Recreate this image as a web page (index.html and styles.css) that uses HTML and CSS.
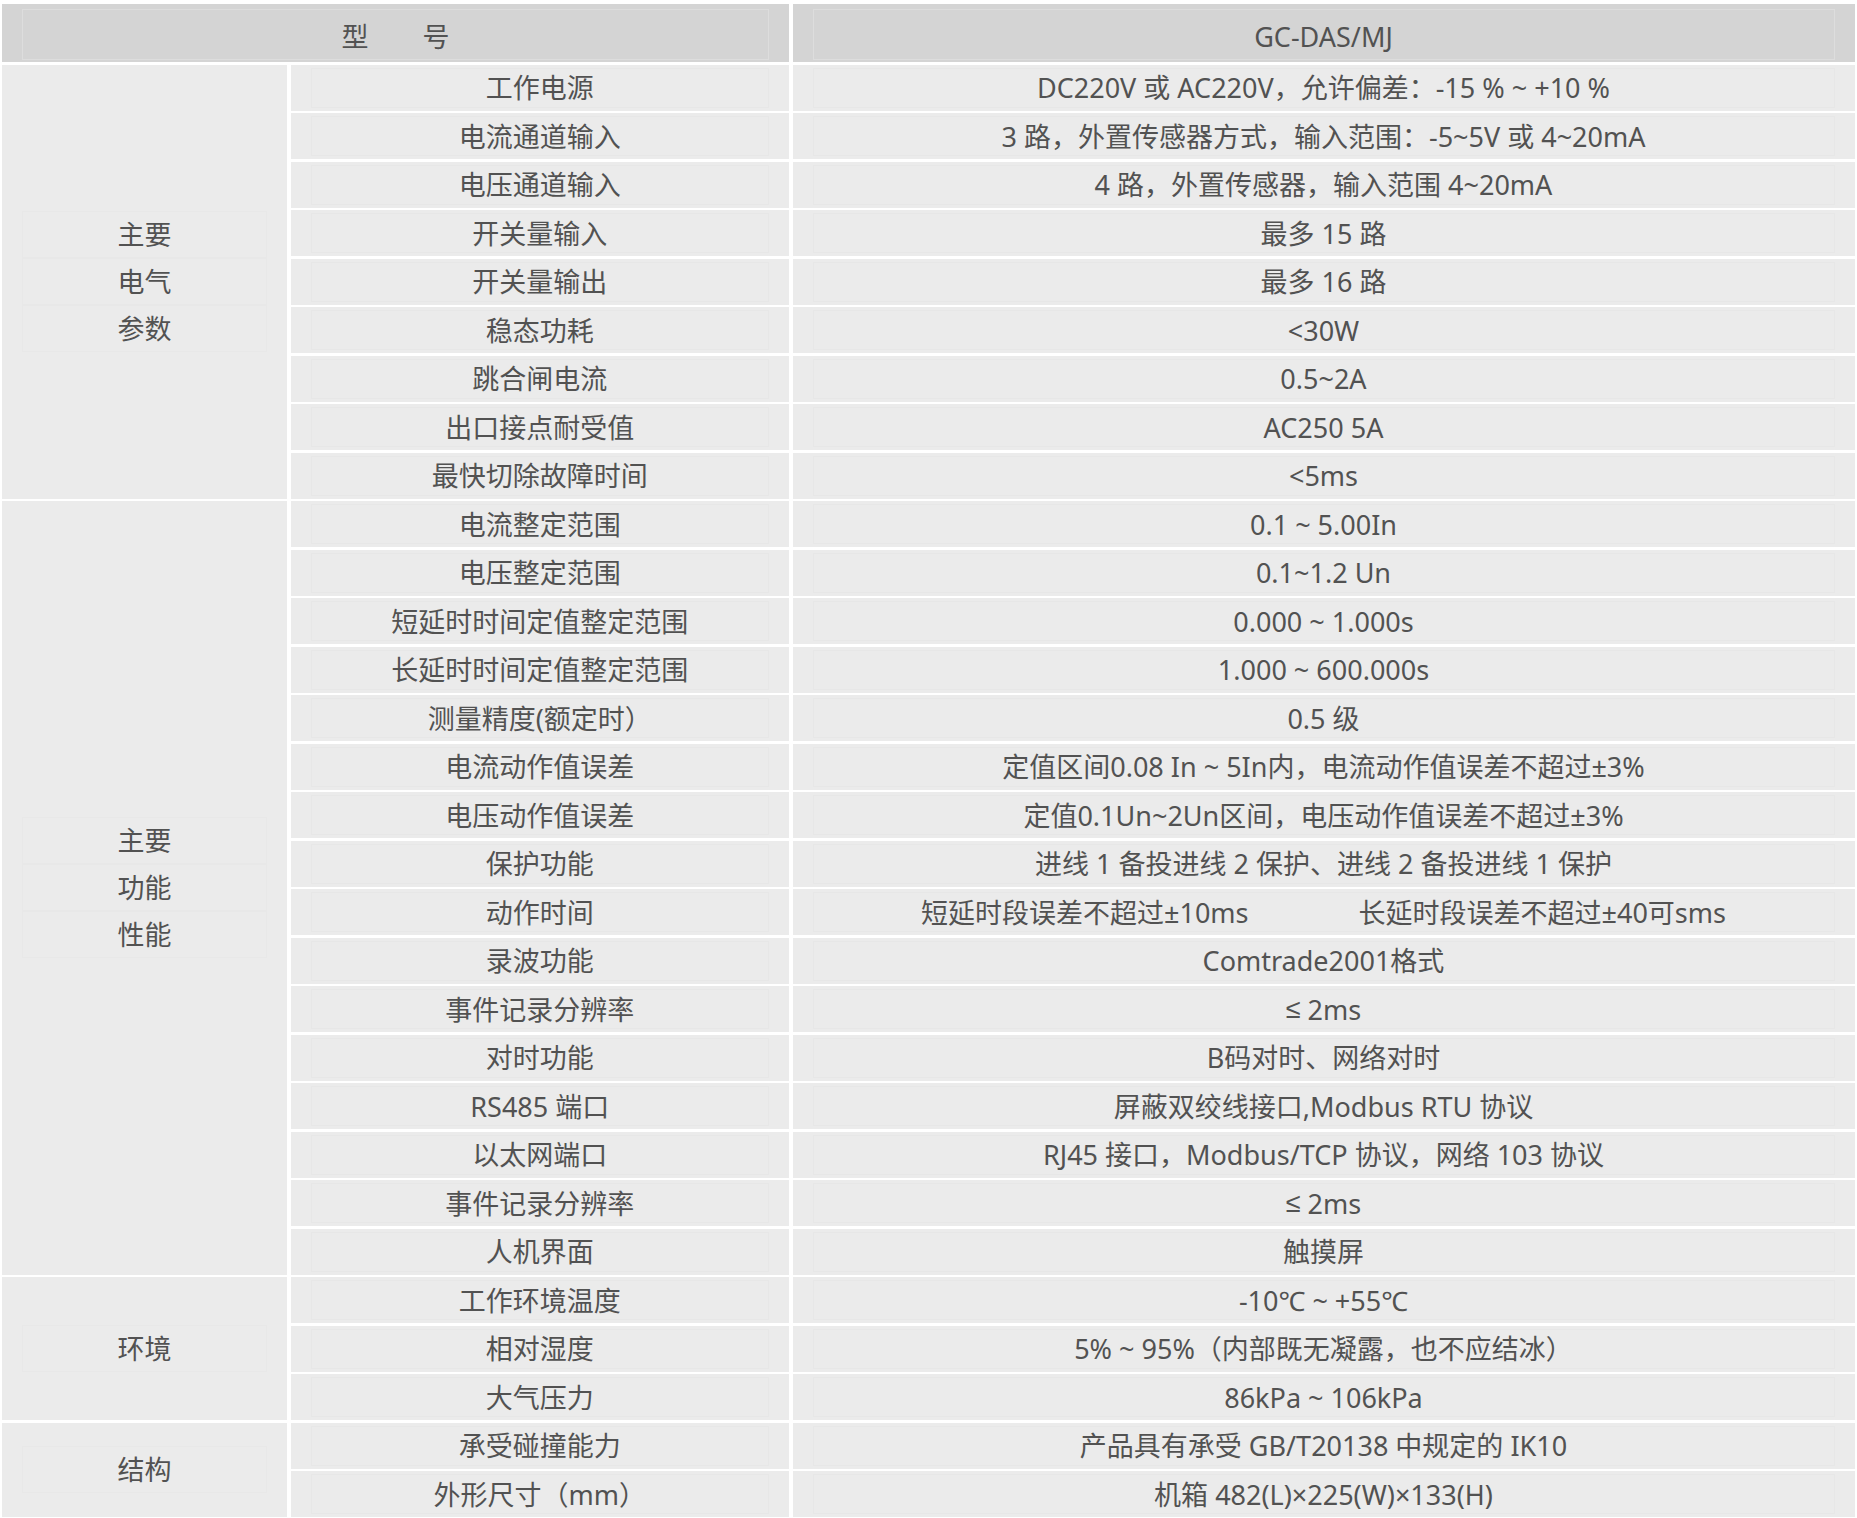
FILE: index.html
```html
<!DOCTYPE html>
<html lang="zh-CN">
<head>
<meta charset="utf-8">
<title>GC-DAS/MJ 技术参数</title>
<link rel="stylesheet" href="styles.css">
</head>
<body>
<div class="spec">
  <div class="cell head span2"><span class="in">型　　号</span></div>
  <div class="cell head"><span class="in">GC-DAS/MJ</span></div>

  <div class="cell group g9"><span class="gl">主要</span><span class="gl">电气</span><span class="gl">参数</span></div>
  <div class="cell"><span class="in">工作电源</span></div>
  <div class="cell"><span class="in">DC220V 或 AC220V，允许偏差：-15 % ~ +10 %</span></div>
  <div class="cell"><span class="in">电流通道输入</span></div>
  <div class="cell"><span class="in">3 路，外置传感器方式，输入范围：-5~5V 或 4~20mA</span></div>
  <div class="cell"><span class="in">电压通道输入</span></div>
  <div class="cell"><span class="in">4 路，外置传感器，输入范围 4~20mA</span></div>
  <div class="cell"><span class="in">开关量输入</span></div>
  <div class="cell"><span class="in">最多 15 路</span></div>
  <div class="cell"><span class="in">开关量输出</span></div>
  <div class="cell"><span class="in">最多 16 路</span></div>
  <div class="cell"><span class="in">稳态功耗</span></div>
  <div class="cell"><span class="in">&lt;30W</span></div>
  <div class="cell"><span class="in">跳合闸电流</span></div>
  <div class="cell"><span class="in">0.5~2A</span></div>
  <div class="cell"><span class="in">出口接点耐受值</span></div>
  <div class="cell"><span class="in">AC250 5A</span></div>
  <div class="cell"><span class="in">最快切除故障时间</span></div>
  <div class="cell"><span class="in">&lt;5ms</span></div>

  <div class="cell group g16"><span class="gl">主要</span><span class="gl">功能</span><span class="gl">性能</span></div>
  <div class="cell"><span class="in">电流整定范围</span></div>
  <div class="cell"><span class="in">0.1 ~ 5.00In</span></div>
  <div class="cell"><span class="in">电压整定范围</span></div>
  <div class="cell"><span class="in">0.1~1.2 Un</span></div>
  <div class="cell"><span class="in">短延时时间定值整定范围</span></div>
  <div class="cell"><span class="in">0.000 ~ 1.000s</span></div>
  <div class="cell"><span class="in">长延时时间定值整定范围</span></div>
  <div class="cell"><span class="in">1.000 ~ 600.000s</span></div>
  <div class="cell"><span class="in">测量精度(额定时）</span></div>
  <div class="cell"><span class="in">0.5 级</span></div>
  <div class="cell"><span class="in">电流动作值误差</span></div>
  <div class="cell"><span class="in">定值区间0.08 In ~ 5In内，电流动作值误差不超过±3%</span></div>
  <div class="cell"><span class="in">电压动作值误差</span></div>
  <div class="cell"><span class="in">定值0.1Un~2Un区间，电压动作值误差不超过±3%</span></div>
  <div class="cell"><span class="in">保护功能</span></div>
  <div class="cell"><span class="in">进线 1 备投进线 2 保护、进线 2 备投进线 1 保护</span></div>
  <div class="cell"><span class="in">动作时间</span></div>
  <div class="cell"><span class="in split"><span>短延时段误差不超过±10ms</span><span>长延时段误差不超过±40可sms</span></span></div>
  <div class="cell"><span class="in">录波功能</span></div>
  <div class="cell"><span class="in">Comtrade2001格式</span></div>
  <div class="cell"><span class="in">事件记录分辨率</span></div>
  <div class="cell"><span class="in"><span class="sym">≤</span>&nbsp;2ms</span></div>
  <div class="cell"><span class="in">对时功能</span></div>
  <div class="cell"><span class="in">B码对时、网络对时</span></div>
  <div class="cell"><span class="in">RS485 端口</span></div>
  <div class="cell"><span class="in">屏蔽双绞线接口,Modbus RTU 协议</span></div>
  <div class="cell"><span class="in">以太网端口</span></div>
  <div class="cell"><span class="in">RJ45 接口，Modbus/TCP 协议，网络 103 协议</span></div>
  <div class="cell"><span class="in">事件记录分辨率</span></div>
  <div class="cell"><span class="in"><span class="sym">≤</span>&nbsp;2ms</span></div>
  <div class="cell"><span class="in">人机界面</span></div>
  <div class="cell"><span class="in">触摸屏</span></div>

  <div class="cell group g3"><span class="gl">环境</span></div>
  <div class="cell"><span class="in">工作环境温度</span></div>
  <div class="cell"><span class="in">-10℃ ~ +55℃</span></div>
  <div class="cell"><span class="in">相对湿度</span></div>
  <div class="cell"><span class="in">5% ~ 95%（内部既无凝露，也不应结冰）</span></div>
  <div class="cell"><span class="in">大气压力</span></div>
  <div class="cell"><span class="in">86kPa ~ 106kPa</span></div>

  <div class="cell group g2"><span class="gl">结构</span></div>
  <div class="cell"><span class="in">承受碰撞能力</span></div>
  <div class="cell"><span class="in">产品具有承受 GB/T20138 中规定的 IK10</span></div>
  <div class="cell"><span class="in">外形尺寸（mm）</span></div>
  <div class="cell"><span class="in">机箱 482(L)×225(W)×133(H)</span></div>
</div>
</body>
</html>
```

FILE: styles.css
```css
html, body {
  margin: 0;
  padding: 0;
  background: #ffffff;
}

body {
  font-family: "Noto Sans", "Noto Sans CJK SC", sans-serif;
  font-size: 27px;
  color: #525252;
  overflow: hidden;
}

.spec {
  display: grid;
  grid-template-columns: 285px 498.5px 1062px;
  grid-template-rows: 58px;
  grid-auto-rows: 46px;
  column-gap: 3.5px;
  row-gap: 2.5px;
  padding: 4px 0 0 2px;
}

.cell {
  background: #ebebeb;
  display: flex;
  align-items: center;
  justify-content: center;
  padding: 3px 20px;
  box-sizing: border-box;
  min-width: 0;
}

.cell .in {
  display: flex;
  align-items: center;
  justify-content: center;
  align-self: stretch;
  flex: 1;
  border: 1px solid rgba(0, 0, 0, 0.015);
  white-space: nowrap;
  line-height: 1;
}

.head {
  background: #d4d4d4;
  padding: 5px 20px 2px;
}

.head .in {
  border-color: rgba(255, 255, 255, 0.22);
  padding-top: 3px;
}

.span2 {
  grid-column: span 2;
}

.group {
  flex-direction: column;
  padding: 0 20px;
}

.g9 { grid-row: span 9; }
.g16 { grid-row: span 16; }
.g3 { grid-row: span 3; }
.g2 { grid-row: span 2; }

.gl {
  display: block;
  align-self: stretch;
  text-align: center;
  line-height: 45px;
  border: 1px solid rgba(0, 0, 0, 0.012);
}

.sym {
  font-family: "Liberation Sans", "DejaVu Sans", sans-serif;
}

.split {
  gap: 110px;
}
```
